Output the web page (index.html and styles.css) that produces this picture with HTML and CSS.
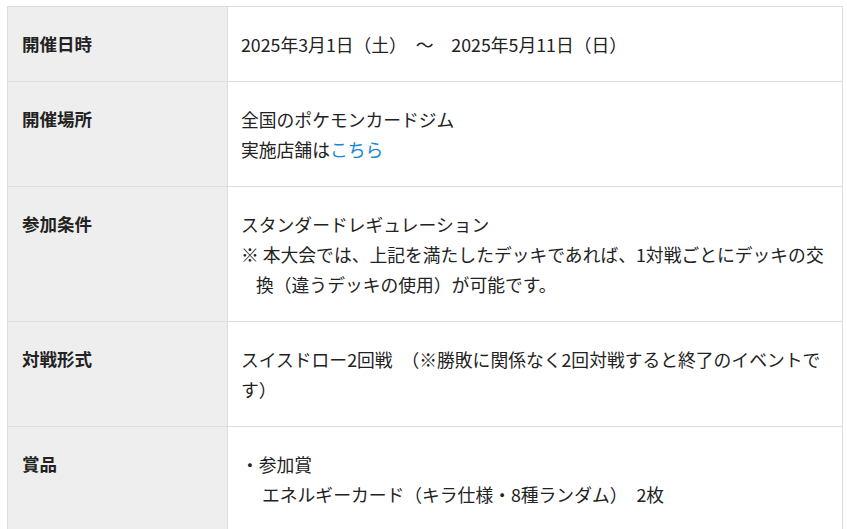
FILE: index.html
```html
<!DOCTYPE html>
<html lang="ja">
<head>
<meta charset="utf-8">
<link rel="stylesheet" href="styles.css">
</head>
<body>
<div class="wrap">
<table class="info">
<tr>
<th>開催日時</th>
<td>2025年3月1日（土）　～　2025年5月11日（日）</td>
</tr>
<tr>
<th>開催場所</th>
<td>全国のポケモンカードジム<br>実施店舗は<a href="#" class="link">こちら</a></td>
</tr>
<tr>
<th>参加条件</th>
<td>スタンダードレギュレーション<p class="note">※ 本大会では、上記を満たしたデッキであれば、1対戦ごとにデッキの交換（違うデッキの使用）が可能です。</p></td>
</tr>
<tr>
<th>対戦形式</th>
<td>スイスドロー2回戦　（※勝敗に関係なく2回対戦すると終了のイベントです）</td>
</tr>
<tr>
<th>賞品</th>
<td>・参加賞<p class="prize">エネルギーカード（キラ仕様・8種ランダム）　2枚</p></td>
</tr>
</table>
</div>
</body>
</html>
```
FILE: styles.css
```css
html, body {
  margin: 0;
  padding: 0;
  background: #fff;
}
.wrap {
  padding: 6px 4px 0 7px;
}
.info {
  width: 836px;
  border-collapse: collapse;
  font-family: "Noto Sans CJK JP", "Noto Sans", sans-serif;
  font-size: 17.8px;
  line-height: 30px;
  color: #222;
}
.info th,
.info td {
  border: 1px solid #ddd;
  vertical-align: top;
  text-align: left;
  padding: 22px 14px 22px 13px;
}
.info th {
  width: 191px;
  background: #eeeeee;
  font-weight: bold;
  font-size: 17.5px;
  padding-left: 14px;
  padding-right: 14px;
}
.link {
  color: #1a87d0;
  text-decoration: none;
}
.note {
  margin: 0;
  padding-left: 15px;
  text-indent: -15px;
}
.prize {
  margin: 0;
  padding-left: 21px;
}
```
